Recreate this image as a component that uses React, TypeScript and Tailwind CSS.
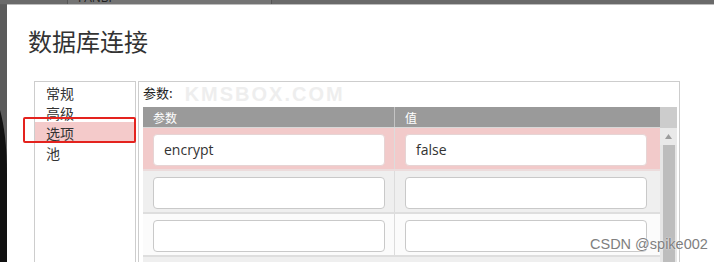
import React from "react";

const cjk = { fontFamily: '"Noto Sans CJK SC", "Noto Sans", sans-serif' };
const latin = { fontFamily: '"Open Sans", "Noto Sans CJK SC", sans-serif' };

function Row({
  bg,
  a,
  b,
  border,
  inputBorder,
}: {
  bg: string;
  a?: string;
  b?: string;
  border: string;
  inputBorder: string;
}) {
  return (
    <div className={`flex h-[43px] ${bg} ${border}`}>
      <div className="w-[252px] shrink-0 pl-[10px] pt-[6px] border-r border-[#dcdcdc]">
        <div
          className={`w-[232px] h-[32px] bg-white rounded-[4px] border ${inputBorder} pl-[10px] text-[14px] leading-[30px] text-[#333]`}
          style={latin}
        >
          {a}
        </div>
      </div>
      <div className="w-[264px] shrink-0 pl-[10px] pt-[6px]">
        <div
          className={`w-[242px] h-[32px] bg-white rounded-[4px] border ${inputBorder} pl-[10px] text-[14px] leading-[30px] text-[#333]`}
          style={latin}
        >
          {b}
        </div>
      </div>
    </div>
  );
}

export default function App() {
  return (
    <div className="relative w-[714px] h-[262px] overflow-hidden bg-[#5e5e5e] flex flex-col">
      {/* top strip */}
      <div className="h-[4px] shrink-0 flex bg-[#6a6a6a] relative">
        <div className="ml-[67px] w-[205px] h-[4px] bg-[#747474] border-x border-[#555] overflow-hidden">
          <div className="pl-[10px] -mt-[8px] text-[12px] leading-[12px] text-[#222]" style={latin}>
            FANBI
          </div>
        </div>
      </div>
      <div className="h-[1px] shrink-0 bg-[#bdbdbd] ml-[7px]" />
      <div className="flex flex-1">
        {/* left background edge */}
        <div className="w-[7px] shrink-0 bg-[#5b5b5b]">
          <svg width="7" height="257" viewBox="0 0 7 257">
            <path d="M0 105 C4 120 7 140 7 170 L7 257 L0 257 Z" fill="#111" />
          </svg>
        </div>
        {/* dialog */}
        <div className="flex-1 bg-white flex flex-col">
          <div className="pl-[21px] pt-[21px] text-[24px] leading-[30px] text-[#333]" style={cjk}>
            数据库连接
          </div>
          <div className="flex mt-[25px] ml-[27px]">
            {/* nav */}
            <div className="w-[102px] h-[200px] shrink-0 border border-[#cdcdcd] border-b-0 text-[14px] text-[#333]" style={cjk}>
              <div className="h-[20px] leading-[20px] pl-[11px] pt-[1px]">常规</div>
              <div className="h-[20px] leading-[20px] pl-[11px] pt-[1px]">高级</div>
              <div className="h-[20px] leading-[20px] pl-[11px] pt-[1px] bg-[#f4caca]">选项</div>
              <div className="h-[20px] leading-[20px] pl-[11px] pt-[1px]">池</div>
            </div>
            {/* panel */}
            <div className="ml-[2px] w-[542px] h-[200px] shrink-0 border border-[#cdcdcd] border-b-0 pl-[4px] pr-[2px]">
              <div className="h-[25px] flex items-start">
                <span className="text-[13px] leading-[22px] text-[#222]" style={cjk}>
                  参数:
                </span>
                <span
                  className="ml-[12px] mt-[1px] text-[20px] leading-[22px] font-bold tracking-[2px] text-[#eeeeee]"
                  style={{ fontFamily: '"Liberation Sans", sans-serif' }}
                >
                  KMSBOX.COM
                </span>
              </div>
              <div className="flex">
                <div className="w-[517px] shrink-0 flex flex-col">
                  <div className="flex h-[21px] bg-[#9a9a9a] border-b border-[#d8d8d8] text-[12px] leading-[21px] text-white" style={cjk}>
                    <div className="w-[252px] shrink-0 pl-[10px] border-r border-[#c4c4c4]">参数</div>
                    <div className="pl-[10px]">值</div>
                  </div>
                  <Row
                    bg="bg-[#f2caca]"
                    a="encrypt"
                    b="false"
                    border="border-b-2 border-[#ecdcdc]"
                    inputBorder="border-[#e6d4d4]"
                  />
                  <Row
                    bg="bg-[#efefef]"
                    border="border-b-2 border-[#dedede]"
                    inputBorder="border-[#c9c9c9]"
                  />
                  <Row
                    bg="bg-[#fbfbfb]"
                    border="border-b-2 border-[#dedede]"
                    inputBorder="border-[#c9c9c9]"
                  />
                  <div className="h-[10px] bg-[#efefef]" />
                </div>
                {/* scrollbar */}
                <div className="w-[17px] shrink-0 flex flex-col">
                  <div className="h-[21px] bg-[#cccccc]" />
                  <div className="h-[17px] bg-[#e9e9e9] flex items-center justify-center">
                    <svg width="7" height="5" viewBox="0 0 7 5">
                      <path d="M0 5 L3.5 0 L7 5 Z" fill="#9c9c9c" />
                    </svg>
                  </div>
                  <div className="flex-1 bg-[#e6e6e6] pl-[3px] pr-[2px]">
                    <div className="h-full bg-[#bdbdbd]" />
                  </div>
                </div>
              </div>
            </div>
          </div>
        </div>
      </div>

      {/* red annotation box */}
      <div className="absolute left-[23px] top-[117px] w-[113px] h-[26px] border-2 border-[#e4231e] rounded-[2px]" />

      {/* CSDN watermark */}
      <div
        className="absolute left-[590px] top-[235px] text-[14.5px] leading-[18px] text-[#808080] [text-shadow:0_0_2px_#fff]"
        style={{ fontFamily: '"Liberation Sans", sans-serif' }}
      >
        CSDN @spike002
      </div>
    </div>
  );
}
